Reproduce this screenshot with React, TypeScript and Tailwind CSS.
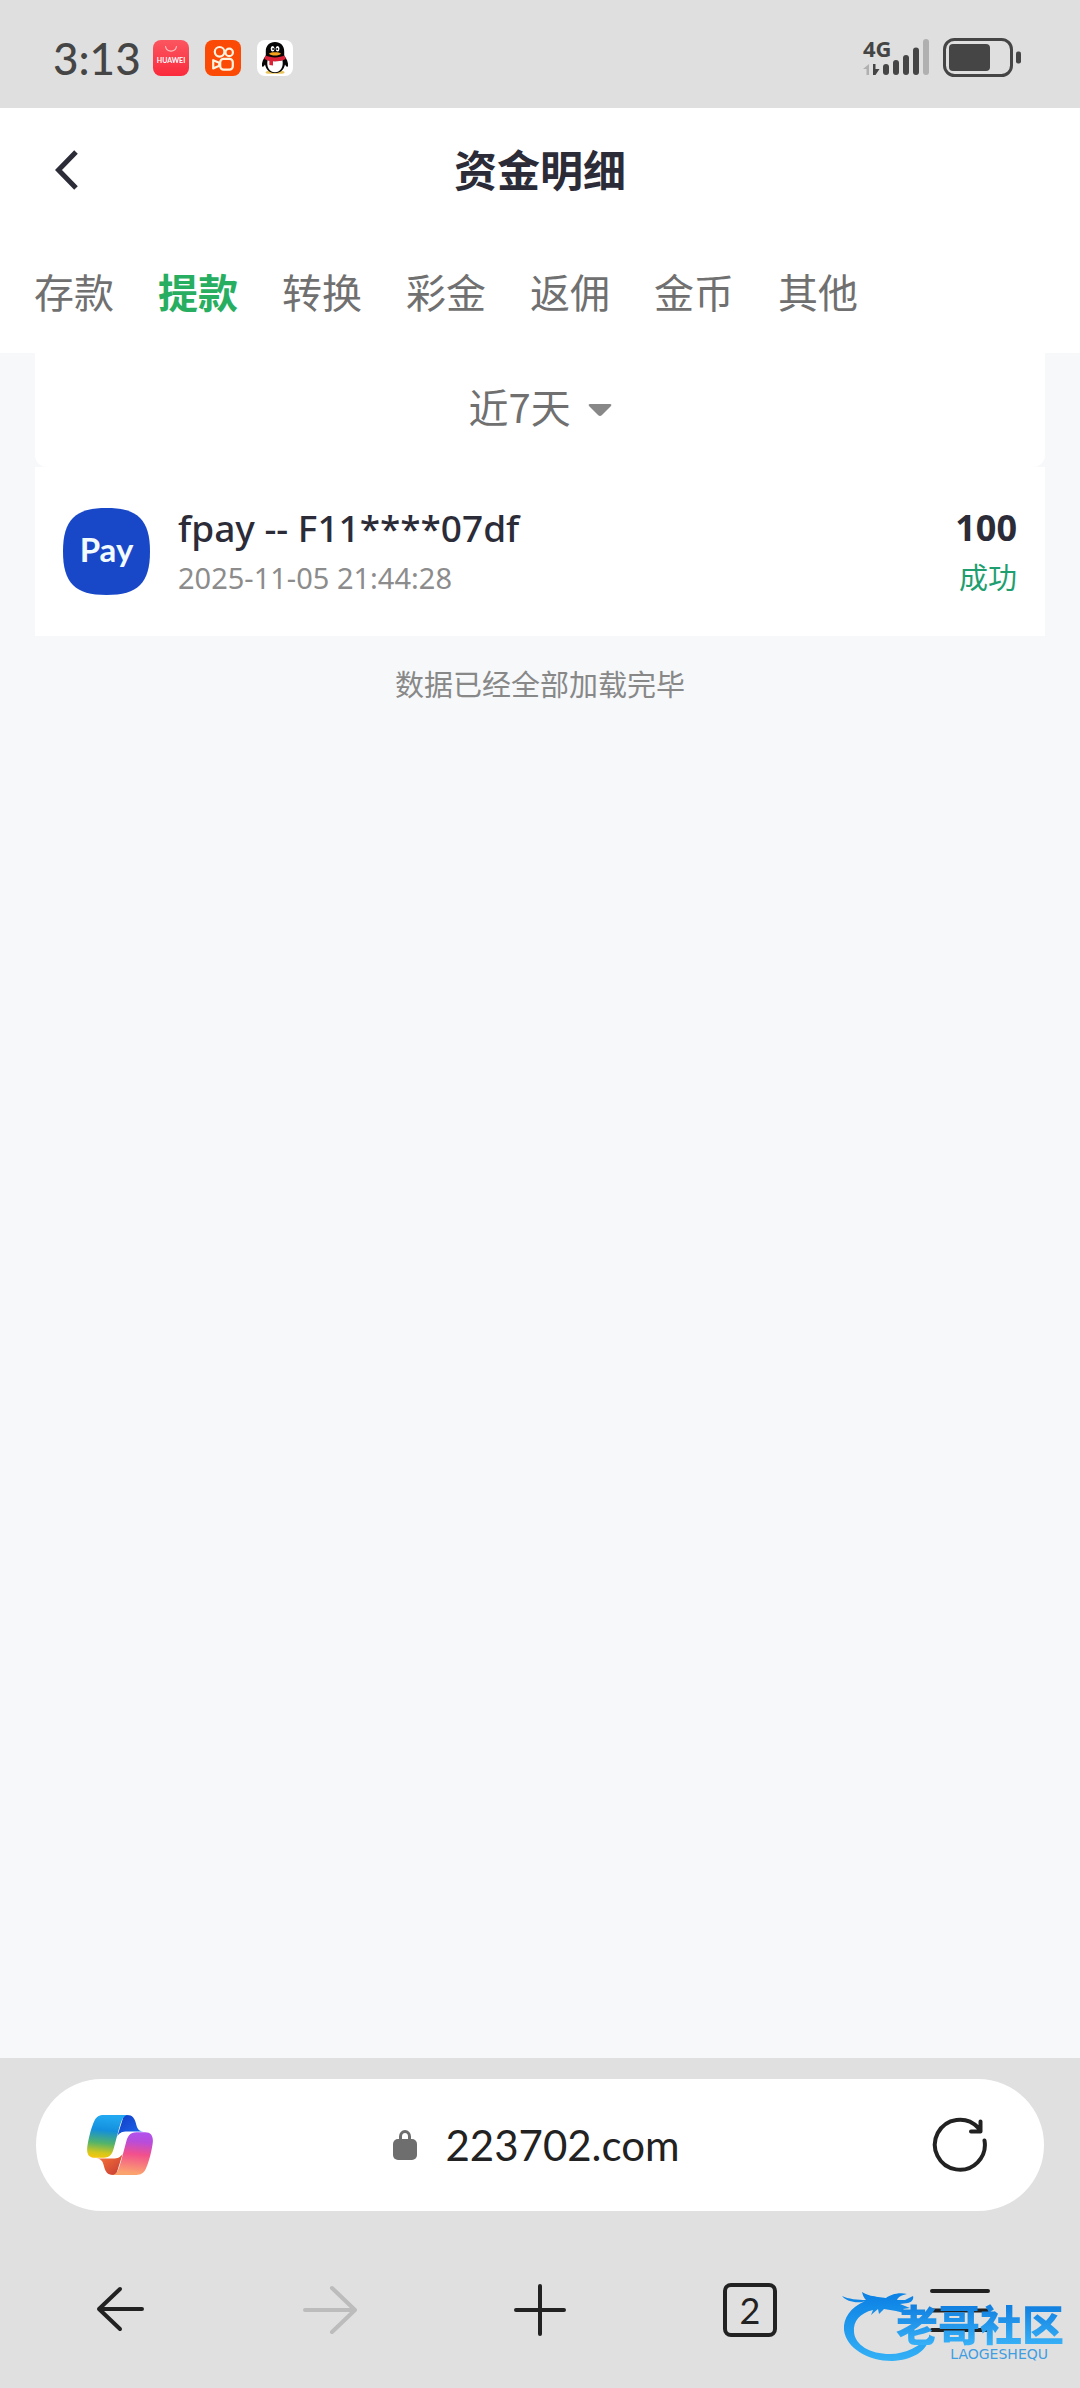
import { useState, type ReactNode } from 'react';

const tabs = ['存款', '提款', '转换', '彩金', '返佣', '金币', '其他'];

function HuaweiIcon() {
  return (
    <svg className="size-9" viewBox="0 0 36 36" aria-hidden="true">
      <defs>
        <linearGradient id="hw" x1="0" y1="0" x2="0" y2="1">
          <stop offset="0" stopColor="#fb5660" />
          <stop offset="1" stopColor="#fa2a3c" />
        </linearGradient>
      </defs>
      <rect width="36" height="36" rx="8" fill="url(#hw)" />
      <path d="M12.5 6.5a5.6 5.6 0 0 0 11 0" fill="none" stroke="#ffc4c4" strokeWidth="1.2" strokeLinecap="round" />
      <text x="18" y="23" textAnchor="middle" fontSize="7" fontWeight="700" fill="#fff" fontFamily="Lato, sans-serif">
        HUAWEI
      </text>
    </svg>
  );
}

function KuaishouIcon() {
  return (
    <svg className="size-9" viewBox="0 0 36 36" fill="none" stroke="#fff3df" strokeWidth="2.2" strokeLinejoin="round" aria-hidden="true">
      <rect width="36" height="36" rx="8" fill="#fb4a05" stroke="none" />
      <circle cx="14.6" cy="11.8" r="4.8" />
      <circle cx="24.2" cy="12.4" r="3.7" />
      <rect x="15.2" y="18.8" width="12.6" height="10.8" rx="3.4" />
      <path d="M8.2 20.2v8.2l6-2.6v-3z" />
    </svg>
  );
}

function PenguinIcon() {
  return (
    <svg className="size-9" viewBox="0 0 36 36" aria-hidden="true">
      <rect width="36" height="36" rx="8" fill="#fff" />
      <path d="M8.5 32.2c1-1.4 4-1.6 9.3-1.6s9 .2 9.8 1.6c.2 1.3-2 1.6-4.600 1.600h-10c-2.700 0-4.500-.4-4.500-1.600z" fill="#e9c35e" />
      <path d="M18 2c-5.600 0-9.200 3.800-9.200 9.200v4.300C6.500 18.500 4.500 22.500 5 26c.3 1.500 1.800.4 3-1.600C9 29.500 12.500 33 18 33s9-3.500 10-8.600c1.200 2 2.700 3.100 3 1.600.5-3.500-1.500-7.500-3.800-10.500v-4.300C27.200 5.800 23.600 2 18 2z" fill="#060606" />
      <path d="M10.600 20c2 1.500 12.800 1.500 14.800 0 1.300 6.500-1.400 12.200-7.400 12.200S9.300 26.500 10.600 20z" fill="#fff" />
      <ellipse cx="15.600" cy="8.700" rx="1.900" ry="2.700" fill="#fff" />
      <ellipse cx="20.600" cy="8.700" rx="1.900" ry="2.700" fill="#fff" />
      <circle cx="16.100" cy="9" r=".9" />
      <circle cx="20.200" cy="9" r=".9" />
      <path d="M12 13.400c2-1.700 10-1.700 12 0-1.500 2.800-10.500 2.800-12 0z" fill="#f5a21c" />
      <path d="M8.400 15.600c5 2.400 14.200 2.400 19.200 0l1 3.300c-3.400 2-8.200 2.700-12.600 2.400v4.300l-3.600-.6v-4.300c-1.800-.4-3.600-1-5-1.800z" fill="#dd2238" />
    </svg>
  );
}

function SignalIcon() {
  return (
    <svg className="h-10 w-[66px] overflow-visible" viewBox="0 0 66 40" role="img" aria-label="4G">
      <text x="0" y="19" fontSize="22" fontWeight="700" fill="#454545" fontFamily="'Noto Sans', sans-serif">
        4G
      </text>
      <path d="M6 26v11h-2.500v-6H0z" fill="#b0b0b0" />
      <path d="M10 26v11h2.500l4-6h-4v-5z" fill="#454545" />
      <g fill="#454545">
        <rect x="20" y="26" width="6" height="11" rx="3" />
        <rect x="30" y="22" width="6" height="15" rx="3" />
        <rect x="40" y="17" width="6" height="20" rx="3" />
        <rect x="50" y="9.500" width="6" height="27.500" rx="3" />
      </g>
      <rect x="60" y="1" width="6" height="36" rx="3" fill="#b0b0b0" />
    </svg>
  );
}

function BatteryIcon() {
  return (
    <svg className="h-10 w-[78px]" viewBox="0 0 78 40" role="img" aria-label="电量">
      <rect x="1.500" y="1.500" width="67" height="36" rx="10" fill="none" stroke="#454545" strokeWidth="3" />
      <rect x="6" y="6" width="41" height="27" rx="4" fill="#454545" />
      <rect x="73" y="13.500" width="5" height="12" rx="2" fill="#454545" />
    </svg>
  );
}

function CopilotLogo() {
  const ribbon =
    'M50 0H125C108 0 103 22 96 45L82 98C77 118 70 130 50 130H24C4 130-2 116 1 95C6 62 14 36 22 18C28 5 38 0 50 0Z';
  const fold = 'M112 0H122C138 0 144 10 148 24C151 36 154 50 172 50H122C106 50 100 54 92 64Z';
  const hole = 'M116 52H120C123 52 124 54 121 60L104 114C101 124 98 130 86 130H72C78 124 80 112 84 98L92 68C95 56 102 52 116 52Z';
  return (
    <svg className="h-[60px] w-[66px]" viewBox="0 0 200 182" aria-hidden="true">
      <defs>
        <linearGradient id="cp-a" x1=".1" y1="0" x2="0" y2="1">
          <stop offset="0" stopColor="#22a8f0" />
          <stop offset=".32" stopColor="#138fdd" />
          <stop offset=".62" stopColor="#52b36b" />
          <stop offset=".85" stopColor="#d3c71c" />
          <stop offset="1" stopColor="#ffc60a" />
        </linearGradient>
        <linearGradient id="cp-b" x1="0" y1="1" x2=".1" y2="0">
          <stop offset="0" stopColor="#b054f0" />
          <stop offset=".25" stopColor="#b84ddb" />
          <stop offset=".55" stopColor="#f2508c" />
          <stop offset="1" stopColor="#fba36f" />
        </linearGradient>
        <linearGradient id="cp-c" x1="0" y1="0" x2="1" y2="1">
          <stop offset="0" stopColor="#123bc4" />
          <stop offset="1" stopColor="#1d6cf0" />
        </linearGradient>
        <linearGradient id="cp-d" x1="0" y1="0" x2="1" y2="1">
          <stop offset="0" stopColor="#c43a35" />
          <stop offset="1" stopColor="#fd7a38" />
        </linearGradient>
      </defs>
      <path d={fold} fill="url(#cp-c)" />
      <path d={fold} fill="url(#cp-d)" transform="rotate(180 100 91)" />
      <path d={ribbon} fill="url(#cp-a)" />
      <path d={ribbon} fill="url(#cp-b)" transform="rotate(180 100 91)" />
      <path d={hole} fill="#fff" />
    </svg>
  );
}

function Watermark() {
  return (
    <div className="pointer-events-none absolute right-4 bottom-5 flex h-[76px] w-[224px] flex-col items-end pt-2">
      <svg className="absolute top-0 left-0 h-[76px] w-[96px]" viewBox="0 0 96 76" aria-hidden="true">
        <defs>
          <linearGradient id="wm" x1="0" y1="0" x2="0" y2="1">
            <stop offset="0" stopColor="#0a80e4" />
            <stop offset="1" stopColor="#34b1f6" />
          </linearGradient>
        </defs>
        <path
          d="M25 9C10 16 3 26 4 38C6 56 28 69 52 69C72 68 87 60 90 44C80 54 66 62 50 62C30 62 15 53 14 40C13 29 20 21 33 18L31 23L38 17L39 22L44 17L56 19L68 22L63 17L70 16L60 12L68 11C72 10 74 7 73 4L65 8L57 8C58 5 62 3 67 2C58 0 50 3 46 6L38 5C34 4 28 4 22 0C23 4 24 6 26 8C18 8 8 7 2 4C6 9 14 11 22 10Z"
          fill="url(#wm)"
        />
      </svg>
      <span className="relative h-[46px] bg-linear-to-b from-[#0a78dc] to-[#38b2f8] bg-clip-text font-['Noto_Sans_CJK_SC',sans-serif] text-[42px] leading-[46px] font-black text-transparent">
        老哥社区
      </span>
      <span className="relative pr-4 font-['DejaVu_Sans',sans-serif] text-[14px] leading-4 text-[#3f9de0]">LAOGESHEQU</span>
    </div>
  );
}

function NavButton({ label, disabled, children }: { label: string; disabled?: boolean; children: ReactNode }) {
  return (
    <button type="button" aria-label={label} disabled={disabled} className="flex h-20 flex-1 items-center justify-center">
      {children}
    </button>
  );
}

export default function App() {
  const [active, setActive] = useState('提款');

  return (
    <div className="flex min-h-screen flex-col bg-[#f6f8fa] font-['Noto_Sans','Noto_Sans_CJK_SC',sans-serif] text-[#2b2c38]">
      <div className="flex h-[108px] items-center justify-between bg-[#dfdfdf] pr-[59px] pl-[53px]">
        <div className="flex items-center gap-4 pt-2">
          <span className="-mr-1 font-['Lato',sans-serif] text-[44px] leading-[60px] font-medium text-[#454545]">3:13</span>
          <HuaweiIcon />
          <KuaishouIcon />
          <PenguinIcon />
        </div>
        <div className="flex items-center gap-[14px] pt-2">
          <SignalIcon />
          <BatteryIcon />
        </div>
      </div>

      <header className="bg-white">
        <div className="grid h-[124px] grid-cols-[1fr_auto_1fr] items-center">
          <button type="button" aria-label="返回" className="ml-9 flex size-[60px] items-center justify-center">
            <svg className="h-10 w-6" viewBox="0 0 24 40" fill="none" stroke="#2b2c38" strokeWidth="5" aria-hidden="true">
              <path d="M22 2L4.500 20L22 38" />
            </svg>
          </button>
          <h1 className="pb-1 font-['Noto_Sans_CJK_SC',sans-serif] text-[43px] leading-[60px] font-bold">资金明细</h1>
        </div>
        <nav className="flex h-[121px] items-center gap-11 px-[34px] pb-1">
          {tabs.map((tab) => (
            <button
              key={tab}
              type="button"
              onClick={() => setActive(tab)}
              className={
                tab === active
                  ? "font-['Noto_Sans_CJK_SC',sans-serif] text-[40px] leading-[60px] font-bold text-[#27ae60]"
                  : "font-['Noto_Sans_CJK_SC',sans-serif] text-[40px] leading-[60px] text-[#707070]"
              }
            >
              {tab}
            </button>
          ))}
        </nav>
      </header>

      <main className="flex-1 px-[35px]">
        <div className="flex h-[114px] items-center justify-center rounded-b-xl bg-white">
          <label className="flex items-center gap-4 text-[#707070]">
            <select
              aria-label="时间范围"
              className="appearance-none bg-transparent pb-2 font-['Noto_Sans_CJK_SC',sans-serif] text-[40px] leading-[60px] outline-none"
            >
              <option>近7天</option>
            </select>
            <svg className="h-[14px] w-6" viewBox="0 0 24 14" aria-hidden="true">
              <path d="M2 1H22Q24 1 23 3L14 12Q12 14 10 12L1 3Q0 1 2 1Z" fill="#888" />
            </svg>
          </label>
        </div>

        <article className="flex h-[169px] items-center bg-white px-7">
          <svg className="size-[87px]" viewBox="0 0 87 87" role="img" aria-label="Pay">
            <path d="M43.500 0C75 0 87 12 87 43.500S75 87 43.500 87S0 75 0 43.500S12 0 43.500 0Z" fill="#1848c8" />
            <text x="43.500" y="54" textAnchor="middle" fontSize="33" fontWeight="700" fill="#f2fbff" fontFamily="Lato, sans-serif">
              Pay
            </text>
          </svg>
          <div className="ml-7 flex-1 pb-1">
            <h2 className="text-[37px] leading-[56px] font-medium">fpay -- F11****07df</h2>
            <time className="block text-[29px] leading-[44px] text-[#8c8c8c]">2025-11-05 21:44:28</time>
          </div>
          <div className="text-right">
            <p className="text-[36px] leading-[52px] font-bold">100</p>
            <p className="text-[29px] leading-[48px] text-[#1f9f70]">成功</p>
          </div>
        </article>

        <p className="mt-[27px] text-center text-[29px] leading-[44px] text-[#888]">数据已经全部加载完毕</p>
      </main>

      <footer className="relative h-[330px] bg-[#e0e0e0] pt-[21px] font-['Lato',sans-serif]">
        <div className="mx-9 flex h-[132px] items-center justify-between rounded-full bg-white pr-14 pl-[51px]">
          <button type="button" aria-label="Copilot">
            <CopilotLogo />
          </button>
          <label className="flex items-center gap-7 pr-3">
            <svg className="h-[30px] w-6" viewBox="0 0 24 30" aria-hidden="true">
              <path d="M7.500 12V6.500a4.500 5 0 0 1 9 0V12" fill="none" stroke="#6e6e6e" strokeWidth="3" />
              <rect y="9" width="24" height="21" rx="5" fill="#6e6e6e" />
            </svg>
            <input
              aria-label="网址"
              defaultValue="223702.com"
              className="field-sizing-content bg-transparent text-[42px] leading-[56px] text-[#222] outline-none"
            />
          </label>
          <button type="button" aria-label="刷新">
            <svg className="size-[56px]" viewBox="0 0 56 56" fill="none" stroke="#222" strokeWidth="4" strokeLinecap="round" strokeLinejoin="round" aria-hidden="true">
              <path d="M52.500 23.500A25 25 0 1 1 46 10.500L48.500 14M48.500 4.500V14.500H39" />
            </svg>
          </button>
        </div>

        <nav className="mt-[59px] flex px-[15px]">
          <NavButton label="后退">
            <svg className="h-[56px] w-[56px]" viewBox="0 0 56 56" fill="none" stroke="#222" strokeWidth="4" strokeLinecap="round" strokeLinejoin="round" aria-hidden="true">
              <path d="M50 27H7M28 7L7 27L28 47" />
            </svg>
          </NavButton>
          <NavButton label="前进" disabled>
            <svg className="h-[56px] w-[56px]" viewBox="0 0 56 56" fill="none" stroke="#bcbcbc" strokeWidth="4" strokeLinecap="round" strokeLinejoin="round" aria-hidden="true">
              <path d="M3 28H53M30 6L53 28L30 50" />
            </svg>
          </NavButton>
          <NavButton label="新建标签页">
            <svg className="h-[56px] w-[56px]" viewBox="0 0 56 56" fill="none" stroke="#222" strokeWidth="4" strokeLinecap="round" aria-hidden="true">
              <path d="M4 28H52M28 4V52" />
            </svg>
          </NavButton>
          <NavButton label="标签页">
            <span className="flex size-[54px] items-center justify-center rounded-lg border-4 border-[#222] text-[36px] leading-none text-[#222]">
              2
            </span>
          </NavButton>
          <NavButton label="菜单">
            <svg className="h-[56px] w-[60px]" viewBox="0 0 60 56" fill="none" stroke="#222" strokeWidth="4" strokeLinecap="round" aria-hidden="true">
              <path d="M2 9H58M2 28.500H58M2 48H58" />
            </svg>
          </NavButton>
        </nav>
        <Watermark />
      </footer>
    </div>
  );
}
